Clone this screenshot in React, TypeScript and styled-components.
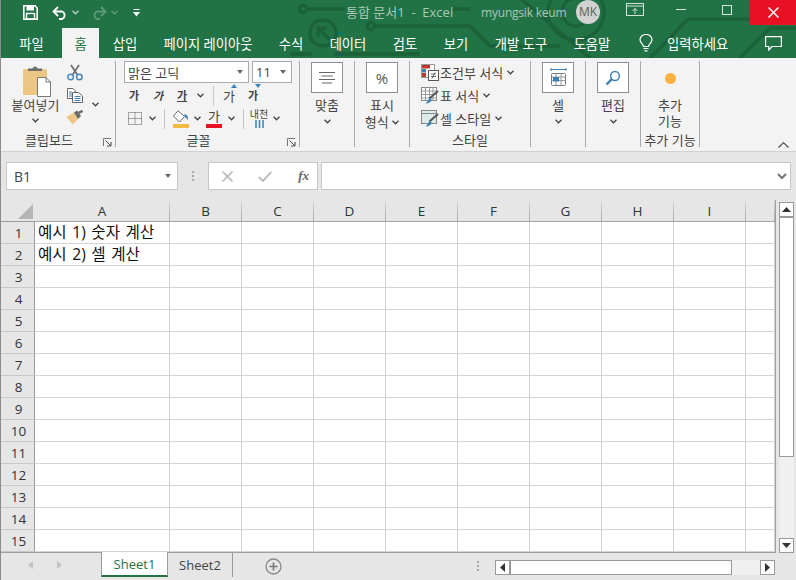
import React from "react";
import styled, { createGlobalStyle } from "styled-components";

const GlobalStyle = createGlobalStyle`
  html, body {
    margin: 0;
    padding: 0;
    background: #e6e6e6;
  }
  * {
    box-sizing: border-box;
  }
  body {
    font-family: "Open Sans", "Noto Sans CJK KR", sans-serif;
  }
`;

const TABS = [
  { label: "파일", width: 61 },
  { label: "홈", width: 37, active: true },
  { label: "삽입", width: 52 },
  { label: "페이지 레이아웃", width: 114 },
  { label: "수식", width: 52 },
  { label: "데이터", width: 62 },
  { label: "검토", width: 52 },
  { label: "보기", width: 50 },
  { label: "개발 도구", width: 80 },
  { label: "도움말", width: 62 },
];

const COLUMNS = ["A", "B", "C", "D", "E", "F", "G", "H", "I", ""];
const ROWS = Array.from({ length: 16 }, (_, i) => i + 1);
const CELLS: Record<string, string> = {
  A1: "예시 1) 숫자 계산",
  A2: "예시 2) 셀 계산",
};

const Chevron: React.FC<{ color?: string }> = ({ color = "#444" }) => (
  <svg width="7" height="5" viewBox="0 0 7 5">
    <path d="M0.5 0.8 L3.5 3.8 L6.5 0.8" fill="none" stroke={color} strokeWidth="1.3" />
  </svg>
);

const Launcher: React.FC = () => (
  <svg width="9" height="9" viewBox="0 0 9 9">
    <path d="M0.5 8 V0.5 H8" fill="none" stroke="#777" />
    <path d="M2.5 2.5 L7.5 7.5 M4 8 H8 V4" fill="none" stroke="#444" />
  </svg>
);

const PasteIcon: React.FC = () => (
  <svg width="28" height="32" viewBox="0 0 28 32">
    <rect x="0" y="4" width="24" height="26" rx="1.5" fill="#edc684" />
    <path d="M5 6 V3.5 H9.5 A2.6 2.6 0 0 1 14.5 3.5 H19 V6 Z" fill="#6e6e6e" />
    <path d="M14.5 12.5 H23 L27.5 17 V31.5 H14.5 Z" fill="#fff" stroke="#777" />
    <path d="M23 12.5 V17 H27.5" fill="none" stroke="#777" />
  </svg>
);

const ScissorsIcon: React.FC = () => (
  <svg width="16" height="17" viewBox="0 0 16 17">
    <path d="M4 1 L10.5 11 M12 1 L5.5 11" fill="none" stroke="#6a6a6a" strokeWidth="1.6" />
    <circle cx="3.6" cy="13" r="2.8" fill="none" stroke="#4a86b8" strokeWidth="1.4" />
    <circle cx="12.4" cy="13" r="2.8" fill="none" stroke="#4a86b8" strokeWidth="1.4" />
  </svg>
);

const CopyIcon: React.FC = () => (
  <svg width="16" height="15" viewBox="0 0 16 15">
    <path d="M0.5 0.5 H6 L8 2.5 V10.5 H0.5 Z" fill="#fff" stroke="#666" />
    <path d="M5.5 4.5 H11.5 L15.5 8 V14.5 H5.5 Z" fill="#fff" stroke="#666" />
    <path d="M2 4 H5 M2 6 H5 M2 8 H5" stroke="#3f80b5" />
    <path d="M7.5 8.5 H13.5 M7.5 10.5 H13.5 M7.5 12.5 H13.5" stroke="#3f80b5" />
  </svg>
);

const BrushIcon: React.FC = () => (
  <svg width="17" height="15" viewBox="0 0 17 15">
    <path d="M0.5 7 L8 2.5 L12 9 L7 14.5 C5 13 3 10 0.5 7 Z" fill="#edc684" />
    <path d="M8 2.5 L11 0.5 L15 6 L12 9 Z" fill="#6a6a6a" />
    <path d="M12.5 3 L16.5 0.8" stroke="#6a6a6a" strokeWidth="2.4" />
  </svg>
);

const BordersIcon: React.FC = () => (
  <svg width="14" height="13" viewBox="0 0 14 13">
    <rect x="0.5" y="0.5" width="13" height="12" fill="none" stroke="#555" strokeDasharray="1 1" />
    <path d="M7 0.5 V12.5 M0.5 6.5 H13.5" stroke="#555" strokeDasharray="1 1" />
  </svg>
);

const FillIcon: React.FC = () => (
  <svg width="17" height="13" viewBox="0 0 17 13">
    <path d="M6 0.8 L12.5 6.5 L7.5 12 L1.5 6 Z" fill="#fff" stroke="#666" />
    <path d="M12.5 4 C15 4.5 16.5 7 16 10 C15 8.5 14 7.5 12.5 7 Z" fill="#3f80b5" />
  </svg>
);

const WrapIcon: React.FC = () => (
  <svg width="9" height="8" viewBox="0 0 9 8">
    <path d="M1 0 V8 M4.5 0 V8 M8 0 V8" stroke="#3f80b5" strokeWidth="1.5" />
  </svg>
);

const AlignIcon: React.FC = () => (
  <svg width="16" height="12" viewBox="0 0 16 12">
    <path d="M0 0.5 H16 M2.5 4 H13.5 M0 7.5 H16 M3 11 H13" stroke="#666" />
  </svg>
);

const CellsIcon: React.FC = () => (
  <svg width="17" height="19" viewBox="0 0 17 19">
    <path d="M1 1.5 H16 M1 0 V3 M16 0 V3" stroke="#3f80b5" />
    <rect x="1.5" y="5.5" width="14" height="12" rx="1" fill="#fff" stroke="#777" />
    <path d="M1.5 9 H15.5 M1.5 12.5 H15.5 M6 5.5 V17.5 M11 5.5 V17.5" stroke="#999" />
    <rect x="3" y="9" width="6" height="4.5" fill="#3f80b5" />
  </svg>
);

const SearchIcon: React.FC = () => (
  <svg width="16" height="16" viewBox="0 0 16 16">
    <circle cx="10" cy="6" r="4.4" fill="#fff" stroke="#3f80b5" strokeWidth="1.5" />
    <path d="M6.8 9.2 L1.5 14.5" stroke="#3f80b5" strokeWidth="2.4" />
  </svg>
);

const CondFormatIcon: React.FC = () => (
  <svg width="18" height="17" viewBox="0 0 18 17">
    <rect x="0.5" y="0.5" width="13" height="13" fill="#fff" stroke="#999" />
    <rect x="1" y="1" width="8" height="3.5" fill="#c0392b" />
    <rect x="1" y="5" width="4" height="3.5" fill="#3f80b5" />
    <rect x="1" y="9" width="4" height="4" fill="#c0392b" />
    <rect x="7.5" y="6.5" width="10" height="10" fill="#fff" stroke="#555" />
    <path d="M10 10 H15 M10 12.5 H15 M14 8.5 L11 14.5" stroke="#444" strokeWidth="0.8" />
  </svg>
);

const TableStyleIcon: React.FC<{ plain?: boolean }> = ({ plain }) => (
  <svg width="18" height="17" viewBox="0 0 18 17">
    <rect x="0.5" y="0.5" width="15" height="13" fill={plain ? "#dbeaea" : "#fff"} stroke="#888" />
    {plain ? (
      <path d="M0.5 3.5 H15.5" stroke="#888" />
    ) : (
      <path d="M0.5 4 H15.5 M0.5 7.5 H15.5 M0.5 11 H15.5 M4.5 0.5 V13.5 M8.5 0.5 V13.5 M12 0.5 V13.5" stroke="#999" />
    )}
    <path d="M17 4 L8.5 11.5" stroke="#555" strokeWidth="2" />
    <path d="M8.5 11 L11 13 C9.5 15.5 7.5 16.5 4.5 16.5 C6.5 15 7 13 8.5 11 Z" fill="#3f80b5" />
  </svg>
);

const App: React.FC = () => (
  <>
    <GlobalStyle />
    <Page>
      <Header>
        <CircuitArt width="796" height="58" viewBox="0 0 796 58">
          <g fill="none" stroke="#1b6239" strokeWidth="3.4">
            <circle cx="303" cy="9" r="3.6" />
            <path d="M307 9 H345 M450 9 H470" />
            <circle cx="323" cy="33" r="13" />
            <path d="M330 40 L318 28 M318 37 V28 H327" />
            <circle cx="371" cy="26" r="3.6" />
            <path d="M375 26 H470 L490 46 H560 M290 54 H312 M334 54 H420" />
            <circle cx="576" cy="12" r="28" />
            <circle cx="576" cy="12" r="14" />
            <path d="M520 -2 L590 58 M688 19 H796 M688 19 L650 58 M740 58 L770 28 H796" />
          </g>
        </CircuitArt>
        <TitleBar>
          <QuickAccess>
            <svg width="15" height="15" viewBox="0 0 15 15">
              <path d="M0.8 0.8 H12 L14.2 3 V14.2 H0.8 Z" fill="none" stroke="#fff" strokeWidth="1.6" />
              <rect x="3.5" y="1" width="7.5" height="4.5" fill="#fff" />
              <rect x="3.5" y="8.5" width="8" height="5.5" fill="none" stroke="#fff" strokeWidth="1.4" />
            </svg>
            <QatSlot $left={14}>
              <svg width="16" height="14" viewBox="0 0 16 14">
                <path d="M2.5 5.5 H10 A4 4 0 0 1 10 13 H7" fill="none" stroke="#fff" strokeWidth="1.8" />
                <path d="M6 1 L1.5 5.5 L6 10" fill="none" stroke="#fff" strokeWidth="1.8" />
              </svg>
            </QatSlot>
            <QatSlot $left={4}>
              <Chevron color="#b9d2c4" />
            </QatSlot>
            <QatSlot $left={12}>
              <svg width="16" height="14" viewBox="0 0 16 14">
                <path d="M13.5 5.5 H6 A4 4 0 0 0 6 13 H9" fill="none" stroke="#5d9a78" strokeWidth="1.8" />
                <path d="M10 1 L14.5 5.5 L10 10" fill="none" stroke="#5d9a78" strokeWidth="1.8" />
              </svg>
            </QatSlot>
            <QatSlot $left={4}>
              <Chevron color="#5d9a78" />
            </QatSlot>
            <QatSlot $left={15}>
              <svg width="7" height="8" viewBox="0 0 7 8">
                <path d="M0.5 0.5 H6.5" stroke="#fff" />
                <path d="M0 3 H7 L3.5 7.5 Z" fill="#fff" />
              </svg>
            </QatSlot>
          </QuickAccess>
          <WindowTitle>통합 문서1&nbsp; - &nbsp;Excel</WindowTitle>
          <UserName>myungsik keum</UserName>
          <Avatar>MK</Avatar>
          <WindowButton>
            <svg width="18" height="13" viewBox="0 0 18 13">
              <rect x="0.5" y="0.5" width="17" height="12" fill="none" stroke="#d5e3db" />
              <path d="M0.5 3 H17.5" stroke="#d5e3db" />
              <path d="M9 11 V5.5 M6.5 8 L9 5.5 L11.5 8" fill="none" stroke="#d5e3db" />
            </svg>
          </WindowButton>
          <WindowButton>
            <svg width="10" height="1" viewBox="0 0 10 1">
              <path d="M0 0.5 H10" stroke="#d5e3db" />
            </svg>
          </WindowButton>
          <WindowButton>
            <svg width="10" height="10" viewBox="0 0 10 10">
              <rect x="0.5" y="0.5" width="9" height="9" fill="none" stroke="#d5e3db" />
            </svg>
          </WindowButton>
          <CloseButton>
            <svg width="11" height="11" viewBox="0 0 11 11">
              <path d="M0.5 0.5 L10.5 10.5 M10.5 0.5 L0.5 10.5" stroke="#fff" strokeWidth="1.5" />
            </svg>
          </CloseButton>
        </TitleBar>
        <TabRow>
          {TABS.map(({ label, width, active }) => (
            <Tab key={label} $width={width} $active={!!active}>
              {label}
            </Tab>
          ))}
          <TellMe>
            <svg width="14" height="18" viewBox="0 0 14 18">
              <path d="M4.5 12.5 C4.5 10 1 9 1 5.8 A6 5.3 0 0 1 13 5.8 C13 9 9.5 10 9.5 12.5 Z" fill="none" stroke="#fff" strokeWidth="1.2" />
              <path d="M4.5 14.5 H9.5 M5.5 16.8 H8.5" stroke="#fff" strokeWidth="1.2" />
            </svg>
            <span>입력하세요</span>
          </TellMe>
          <CommentButton>
            <svg width="17" height="15" viewBox="0 0 17 15">
              <path d="M0.6 0.6 H16.4 V10.5 H7 L3.8 14 V10.5 H0.6 Z" fill="none" stroke="#fff" strokeWidth="1.2" />
            </svg>
          </CommentButton>
        </TabRow>
      </Header>

      <Ribbon>
        <Group $width={115}>
          <ClipboardBody>
            <PasteColumn>
              <PasteIcon />
              <CommandLabel>붙여넣기</CommandLabel>
              <PasteChevron>
                <Chevron />
              </PasteChevron>
            </PasteColumn>
            <ClipboardTools>
              <ScissorsIcon />
              <CopyIcon />
              <BrushIcon />
            </ClipboardTools>
            <ClipboardChevron>
              <Chevron />
            </ClipboardChevron>
          </ClipboardBody>
          <GroupLabel $launcher>
            클립보드
            <LauncherSlot>
              <Launcher />
            </LauncherSlot>
          </GroupLabel>
        </Group>

        <Group $width={184}>
          <FontBody>
            <SelectRow>
              <FontSelect $width={125}>
                <span>맑은 고딕</span>
                <SelectCaret />
              </FontSelect>
              <FontSelect $width={40}>
                <span>11</span>
                <SelectCaret />
              </FontSelect>
            </SelectRow>
            <ToolRow>
              <ToolSlot $width={24}><Glyph>가</Glyph></ToolSlot>
              <ToolSlot $width={24}><Glyph $italic>가</Glyph></ToolSlot>
              <ToolSlot $width={24}><Glyph $underline>가</Glyph></ToolSlot>
              <ToolSlot $width={12}><Chevron /></ToolSlot>
              <ToolDivider $left={7} $right={3} />
              <ToolSlot $width={24}>
                <Glyph $big>가</Glyph>
                <SizeArrow $up />
              </ToolSlot>
              <ToolSlot $width={24}>
                <Glyph>가</Glyph>
                <SizeArrow />
              </ToolSlot>
            </ToolRow>
            <ToolRow>
              <ToolSlot $width={25}><BordersIcon /></ToolSlot>
              <ToolSlot $width={10}><Chevron /></ToolSlot>
              <ToolDivider $left={7} $right={4} />
              <ToolSlot $width={23}>
                <ColorStack>
                  <FillIcon />
                  <ColorBar $color="#f4b942" />
                </ColorStack>
              </ToolSlot>
              <ToolSlot $width={10}><Chevron /></ToolSlot>
              <ToolSlot $width={24}>
                <ColorStack>
                  <Glyph $big>가</Glyph>
                  <ColorBar $color="#e81123" />
                </ColorStack>
              </ToolSlot>
              <ToolSlot $width={10}><Chevron /></ToolSlot>
              <ToolDivider $left={7} $right={3} />
              <ToolSlot $width={24}>
                <ColorStack>
                  <WrapLabel>내천</WrapLabel>
                  <WrapIcon />
                </ColorStack>
              </ToolSlot>
              <ToolSlot $width={10}><Chevron /></ToolSlot>
            </ToolRow>
          </FontBody>
          <GroupLabel $launcher>
            글꼴
            <LauncherSlot>
              <Launcher />
            </LauncherSlot>
          </GroupLabel>
        </Group>

        <Group $width={55}>
          <LargeCommand>
            <BoxButton><AlignIcon /></BoxButton>
            <CommandLabel>맞춤</CommandLabel>
            <Chevron />
          </LargeCommand>
        </Group>

        <Group $width={55}>
          <LargeCommand>
            <BoxButton><Percent>%</Percent></BoxButton>
            <CommandLabel>표시</CommandLabel>
            <InlineCommand>형식 <Chevron /></InlineCommand>
          </LargeCommand>
        </Group>

        <Group $width={121}>
          <StyleList>
            <StyleRow>
              <CondFormatIcon />
              <span>조건부 서식</span>
              <Chevron />
            </StyleRow>
            <StyleRow>
              <TableStyleIcon />
              <span>표 서식</span>
              <Chevron />
            </StyleRow>
            <StyleRow>
              <TableStyleIcon plain />
              <span>셀 스타일</span>
              <Chevron />
            </StyleRow>
          </StyleList>
          <GroupLabel>스타일</GroupLabel>
        </Group>

        <Group $width={55}>
          <LargeCommand>
            <BoxButton><CellsIcon /></BoxButton>
            <CommandLabel>셀</CommandLabel>
            <Chevron />
          </LargeCommand>
        </Group>

        <Group $width={55}>
          <LargeCommand>
            <BoxButton><SearchIcon /></BoxButton>
            <CommandLabel>편집</CommandLabel>
            <Chevron />
          </LargeCommand>
        </Group>

        <Group $width={59}>
          <AddInCommand>
            <AddInDot />
            <AddInText>추가<br />기능</AddInText>
          </AddInCommand>
          <GroupLabel>추가 기능</GroupLabel>
        </Group>

        <CollapseRibbon>
          <svg width="11" height="6" viewBox="0 0 11 6">
            <path d="M0.5 5.5 L5.5 0.7 L10.5 5.5" fill="none" stroke="#444" strokeWidth="1.1" />
          </svg>
        </CollapseRibbon>
      </Ribbon>

      <FormulaBar>
        <NameBox>
          <span>B1</span>
          <SelectCaret />
        </NameBox>
        <GripDots>
          <i /><i /><i />
        </GripDots>
        <FormulaActions>
          <svg width="11" height="11" viewBox="0 0 11 11">
            <path d="M0.5 0.5 L10.5 10.5 M10.5 0.5 L0.5 10.5" stroke="#bdbdbd" strokeWidth="1.6" />
          </svg>
          <svg width="14" height="11" viewBox="0 0 14 11">
            <path d="M0.8 6 L5 10 L13.2 0.8" fill="none" stroke="#bdbdbd" strokeWidth="2" />
          </svg>
          <FxLabel>fx</FxLabel>
        </FormulaActions>
        <FormulaInput>
          <svg width="10" height="7" viewBox="0 0 10 7">
            <path d="M1 1 L5 5 L9 1" fill="none" stroke="#777" strokeWidth="2" />
          </svg>
        </FormulaInput>
      </FormulaBar>

      <SheetArea>
        <Sheet>
          <CornerCell>
            <CornerTriangle />
          </CornerCell>
          {COLUMNS.map((col, i) => (
            <ColumnHeader key={i}>{col}</ColumnHeader>
          ))}
          {ROWS.map((row) => (
            <React.Fragment key={row}>
              <RowHeader>{row < 16 ? row : ""}</RowHeader>
              {COLUMNS.map((col, i) => (
                <Cell key={i}>{CELLS[`${col}${row}`]}</Cell>
              ))}
            </React.Fragment>
          ))}
        </Sheet>
        <VerticalScroll>
          <ScrollButton $height={15}>
            <svg width="9" height="5" viewBox="0 0 9 5"><path d="M0 5 H9 L4.5 0 Z" fill="#333" /></svg>
          </ScrollButton>
          <VerticalThumb />
          <ScrollTrack />
          <ScrollButton $height={15}>
            <svg width="9" height="5" viewBox="0 0 9 5"><path d="M0 0 H9 L4.5 5 Z" fill="#333" /></svg>
          </ScrollButton>
        </VerticalScroll>
      </SheetArea>

      <BottomBar>
        <SheetNav>
          <svg width="5" height="8" viewBox="0 0 5 8"><path d="M5 0 V8 L0 4 Z" fill="#c4c4c4" /></svg>
          <svg width="5" height="8" viewBox="0 0 5 8"><path d="M0 0 V8 L5 4 Z" fill="#c4c4c4" /></svg>
        </SheetNav>
        <SheetTab $active>Sheet1</SheetTab>
        <SheetTab>Sheet2</SheetTab>
        <AddSheet>
          <svg width="17" height="17" viewBox="0 0 17 17">
            <circle cx="8.5" cy="8.5" r="7.5" fill="none" stroke="#8a8a8a" strokeWidth="1.3" />
            <path d="M8.5 4.5 V12.5 M4.5 8.5 H12.5" stroke="#777" strokeWidth="1.6" />
          </svg>
        </AddSheet>
        <BarGrip>
          <i /><i /><i />
        </BarGrip>
        <HorizontalScroll>
          <ScrollButton $width={15}>
            <svg width="5" height="9" viewBox="0 0 5 9"><path d="M5 0 V9 L0 4.5 Z" fill="#333" /></svg>
          </ScrollButton>
          <HorizontalThumb />
          <ScrollTrack />
          <ScrollButton $width={15}>
            <svg width="5" height="9" viewBox="0 0 5 9"><path d="M0 0 V9 L5 4.5 Z" fill="#333" /></svg>
          </ScrollButton>
        </HorizontalScroll>
      </BottomBar>
    </Page>
  </>
);

const Page = styled.div`
  width: 796px;
  height: 580px;
  overflow: hidden;
  display: flex;
  flex-direction: column;
  background: #e6e6e6;
  color: #444;
  border-left: 1px solid #8c8c8c;
`;

const Header = styled.header`
  position: relative;
  height: 58px;
  flex: none;
  background: #217346;
  margin-left: -1px;
`;

const CircuitArt = styled.svg`
  position: absolute;
  inset: 0;
`;

const TitleBar = styled.div`
  position: relative;
  display: flex;
  align-items: flex-start;
  height: 28px;
`;

const QuickAccess = styled.div`
  width: 346px;
  height: 25px;
  padding-left: 23px;
  display: flex;
  align-items: center;
`;

const QatSlot = styled.span<{ $left: number }>`
  display: flex;
  margin-left: ${({ $left }) => $left}px;
`;

const WindowTitle = styled.div`
  width: 135px;
  font-size: 13px;
  line-height: 25px;
  color: #a9c9b7;
  white-space: nowrap;
`;

const UserName = styled.div`
  width: 95px;
  font-size: 12px;
  letter-spacing: -0.2px;
  line-height: 25px;
  color: #a9c9b7;
  white-space: nowrap;
`;

const Avatar = styled.div`
  width: 24px;
  height: 24px;
  margin-right: 12px;
  border-radius: 50%;
  background: #d2d2d2;
  color: #5d5d5d;
  font-size: 12px;
  line-height: 24px;
  text-align: center;
`;

const WindowButton = styled.div`
  width: 46px;
  height: 25px;
  display: flex;
  align-items: center;
  justify-content: center;
  padding-bottom: 6px;
`;

const CloseButton = styled(WindowButton)`
  background: #e81123;
  padding-bottom: 0;
`;

const TabRow = styled.nav`
  position: relative;
  display: flex;
  height: 30px;
  padding-left: 1px;
`;

const Tab = styled.div<{ $width: number; $active: boolean }>`
  width: ${({ $width }) => $width}px;
  display: flex;
  align-items: center;
  justify-content: center;
  font-size: 13.3px;
  color: ${({ $active }) => ($active ? "#217346" : "#fff")};
  background: ${({ $active }) => ($active ? "#f3f3f3" : "transparent")};
`;

const TellMe = styled.div`
  display: flex;
  align-items: center;
  gap: 14px;
  margin-left: 16px;
  width: 126px;
  font-size: 13.3px;
  color: #fff;
`;

const CommentButton = styled.div`
  display: flex;
  align-items: center;
`;

const Ribbon = styled.section`
  position: relative;
  display: flex;
  flex: none;
  height: 94px;
  padding-top: 3px;
  background: #f3f3f3;
  border-bottom: 1px solid #d2d2d2;
`;

const Group = styled.div<{ $width: number }>`
  position: relative;
  width: ${({ $width }) => $width}px;
  height: 86px;
  display: flex;
  flex-direction: column;
  border-right: 1px solid #a9a9a9;
`;

const GroupLabel = styled.div<{ $launcher?: boolean }>`
  position: relative;
  flex: none;
  height: 15px;
  padding-right: ${({ $launcher }) => ($launcher ? 18 : 0)}px;
  font-size: 13px;
  line-height: 17px;
  text-align: center;
  color: #444;
  white-space: nowrap;
`;

const LauncherSlot = styled.span`
  position: absolute;
  right: 3px;
  bottom: 0;
  display: flex;
`;

const ClipboardBody = styled.div`
  flex: 1;
  display: flex;
`;

const PasteColumn = styled.div`
  width: 69px;
  display: flex;
  flex-direction: column;
  align-items: center;
  padding-top: 4px;
  > svg {
    margin-left: 3px;
  }
`;

const PasteChevron = styled.div`
  display: flex;
  margin-top: 4px;
`;

const CommandLabel = styled.div`
  font-size: 13px;
  line-height: 17px;
  color: #444;
  white-space: nowrap;
`;

const ClipboardTools = styled.div`
  width: 9px;
  display: flex;
  flex-direction: column;
  align-items: center;
  gap: 7px;
  padding-top: 3px;
`;

const ClipboardChevron = styled.div`
  margin-left: 13px;
  padding-top: 29px;
`;

const FontBody = styled.div`
  flex: 1;
  padding-left: 6px;
`;

const SelectRow = styled.div`
  display: flex;
  gap: 3px;
  margin: 0 0 1px 2px;
`;

const FontSelect = styled.div<{ $width: number }>`
  width: ${({ $width }) => $width}px;
  height: 22px;
  display: flex;
  align-items: center;
  justify-content: space-between;
  padding: 0 5px 0 3px;
  background: #fff;
  border: 1px solid #ababab;
  font-size: 13px;
  color: #444;
`;

const SelectCaret = styled.i`
  width: 0;
  height: 0;
  border-left: 3.5px solid transparent;
  border-right: 3.5px solid transparent;
  border-top: 4px solid #666;
`;

const ToolRow = styled.div`
  display: flex;
  align-items: center;
  height: 23px;
`;

const ToolSlot = styled.div<{ $width: number }>`
  position: relative;
  width: ${({ $width }) => $width}px;
  height: 100%;
  display: flex;
  align-items: center;
  justify-content: center;
`;

const ToolDivider = styled.div<{ $left: number; $right: number }>`
  width: 1px;
  height: 20px;
  background: #c6c6c6;
  margin: 0 ${({ $right }) => $right}px 0 ${({ $left }) => $left}px;
`;

const Glyph = styled.span<{ $italic?: boolean; $underline?: boolean; $big?: boolean }>`
  font-size: ${({ $big }) => ($big ? 13 : 11)}px;
  line-height: 14px;
  font-weight: ${({ $big }) => ($big ? 400 : 700)};
  font-style: ${({ $italic }) => ($italic ? "italic" : "normal")};
  text-decoration: ${({ $underline }) => ($underline ? "underline" : "none")};
  color: #444;
`;

const SizeArrow = styled.i<{ $up?: boolean }>`
  position: absolute;
  top: 0;
  right: 4px;
  width: 0;
  height: 0;
  border-left: 3px solid transparent;
  border-right: 3px solid transparent;
  border-bottom: ${({ $up }) => ($up ? "4px solid #3f80b5" : "none")};
  border-top: ${({ $up }) => ($up ? "none" : "4px solid #3f80b5")};
`;

const ColorStack = styled.div`
  display: flex;
  flex-direction: column;
  align-items: center;
  gap: 1px;
`;

const ColorBar = styled.i<{ $color: string }>`
  width: 16px;
  height: 4px;
  background: ${({ $color }) => $color};
`;

const WrapLabel = styled.span`
  font-size: 10px;
  line-height: 10px;
  color: #444;
`;

const LargeCommand = styled.div`
  display: flex;
  flex-direction: column;
  align-items: center;
  padding-top: 1px;
  > svg {
    margin-top: 5px;
  }
`;

const BoxButton = styled.div`
  width: 32px;
  height: 31px;
  margin-bottom: 4px;
  display: flex;
  align-items: center;
  justify-content: center;
  background: #fff;
  border: 1px solid #8f8f8f;
`;

const Percent = styled.span`
  font-size: 15px;
  color: #555;
`;

const InlineCommand = styled.div`
  font-size: 13px;
  line-height: 16px;
  color: #444;
  white-space: nowrap;
  svg {
    vertical-align: 2px;
  }
`;

const StyleList = styled.div`
  flex: 1;
  display: flex;
  flex-direction: column;
  padding: 0 0 0 11px;
`;

const StyleRow = styled.div`
  display: flex;
  align-items: center;
  height: 23px;
  font-size: 13px;
  color: #444;
  white-space: nowrap;
  span {
    margin: 0 4px 0 1px;
  }
`;

const AddInCommand = styled.div`
  flex: 1;
  display: flex;
  flex-direction: column;
  align-items: center;
`;

const AddInDot = styled.i`
  width: 11px;
  height: 11px;
  margin-top: 12px;
  border-radius: 50%;
  background: #fbb040;
`;

const AddInText = styled.div`
  margin-top: 13px;
  font-size: 13px;
  line-height: 16px;
  text-align: center;
  color: #444;
`;

const CollapseRibbon = styled.div`
  position: absolute;
  right: 7px;
  bottom: 3px;
  display: flex;
`;

const FormulaBar = styled.div`
  flex: none;
  height: 48px;
  display: flex;
  align-items: center;
  padding: 0 5px;
`;

const NameBox = styled.div`
  width: 172px;
  height: 28px;
  display: flex;
  align-items: center;
  justify-content: space-between;
  padding: 0 6px 0 7px;
  background: #fff;
  border: 1px solid #c6c6c6;
  font-size: 14px;
  color: #444;
`;

const GripDots = styled.div`
  width: 30px;
  display: flex;
  flex-direction: column;
  align-items: center;
  gap: 2px;
  i {
    width: 2px;
    height: 2px;
    background: #aaa;
  }
`;

const FormulaActions = styled.div`
  width: 110px;
  height: 28px;
  display: flex;
  align-items: center;
  justify-content: space-between;
  padding: 0 8px 0 13px;
  background: #fff;
  border: 1px solid #c6c6c6;
  svg:nth-child(2) {
    margin-left: -2px;
  }
`;

const FxLabel = styled.span`
  font-family: "Liberation Serif", serif;
  font-style: italic;
  font-weight: 700;
  font-size: 13px;
  color: #666;
`;

const FormulaInput = styled.div`
  width: 470px;
  height: 28px;
  margin-left: 3px;
  display: flex;
  align-items: center;
  justify-content: flex-end;
  padding-right: 3px;
  background: #fff;
  border: 1px solid #c6c6c6;
`;

const SheetArea = styled.div`
  flex: none;
  height: 353px;
  display: flex;
`;

const Sheet = styled.div`
  width: 775px;
  height: 353px;
  overflow: hidden;
  display: grid;
  grid-template-columns: 34px 135px repeat(8, 72px) 29px;
  grid-auto-rows: 22px;
  grid-template-rows: 22px;
  background: #fff;
  border-right: 1px solid #a0a0a0;
  border-bottom: 1px solid #a0a0a0;
`;

const CornerCell = styled.div`
  display: flex;
  align-items: flex-end;
  justify-content: flex-end;
  padding: 0 2px 2px 0;
  background: #e6e6e6;
  border-bottom: 1px solid #9b9b9b;
`;

const CornerTriangle = styled.i`
  width: 15px;
  height: 15px;
  background: #b6b6b6;
  clip-path: polygon(100% 0, 100% 100%, 0 100%);
`;

const ColumnHeader = styled.div`
  display: flex;
  align-items: center;
  justify-content: center;
  background: #e6e6e6;
  border-bottom: 1px solid #9b9b9b;
  border-right: 1px solid;
  border-image: linear-gradient(#dcdcdc, #a3a3a3) 1;
  font-size: 13.5px;
  color: #333;
`;

const RowHeader = styled.div`
  display: flex;
  align-items: center;
  justify-content: center;
  padding-left: 2px;
  background: #e6e6e6;
  border-right: 1px solid #9b9b9b;
  border-bottom: 1px solid #c8c8c8;
  font-size: 13.5px;
  color: #333;
`;

const Cell = styled.div`
  padding-left: 3px;
  border-right: 1px solid #d4d4d4;
  border-bottom: 1px solid #d4d4d4;
  font-size: 15.6px;
  word-spacing: 1.5px;
  line-height: 21px;
  color: #111;
  white-space: nowrap;
`;

const VerticalScroll = styled.div`
  width: 15px;
  height: 351px;
  margin: 2px 0 0 3px;
  display: flex;
  flex-direction: column;
  background: #f0f0f0;
`;

const ScrollButton = styled.div<{ $height?: number; $width?: number }>`
  flex: none;
  width: ${({ $width }) => ($width ? `${$width}px` : "auto")};
  height: ${({ $height }) => ($height ? `${$height}px` : "auto")};
  display: flex;
  align-items: center;
  justify-content: center;
  background: #fff;
  border: 1px solid #9a9a9a;
`;

const VerticalThumb = styled.div`
  height: 240px;
  flex: none;
  background: #fff;
  border: 1px solid #9a9a9a;
`;

const ScrollTrack = styled.div`
  flex: 1;
  background: #f0f0f0;
`;

const BottomBar = styled.footer`
  flex: 1;
  display: flex;
  align-items: flex-start;
  background: #e6e6e6;
`;

const SheetNav = styled.div`
  width: 100px;
  height: 24px;
  display: flex;
  align-items: center;
  gap: 24px;
  padding-left: 27px;
`;

const SheetTab = styled.div<{ $active?: boolean }>`
  width: ${({ $active }) => ($active ? 67 : 65)}px;
  height: ${({ $active }) => ($active ? 25 : 24)}px;
  margin-top: ${({ $active }) => ($active ? -1 : 0)}px;
  display: flex;
  align-items: center;
  justify-content: center;
  font-size: 13px;
  color: ${({ $active }) => ($active ? "#217346" : "#444")};
  background: ${({ $active }) => ($active ? "#fff" : "transparent")};
  border-left: ${({ $active }) => ($active ? "1px solid #9b9b9b" : "none")};
  border-right: 1px solid #9b9b9b;
  border-bottom: ${({ $active }) => ($active ? "2px solid #217346" : "none")};
`;

const AddSheet = styled.div`
  width: 230px;
  height: 26px;
  padding: 5px 0 0 32px;
  display: flex;
  align-items: flex-start;
`;

const BarGrip = styled(GripDots)`
  height: 26px;
  justify-content: center;
`;

const HorizontalScroll = styled.div`
  width: 280px;
  height: 15px;
  margin: 7px 0 0 2px;
  display: flex;
  background: #f0f0f0;
`;

const HorizontalThumb = styled.div`
  width: 222px;
  flex: none;
  background: #fff;
  border: 1px solid #9a9a9a;
`;

export default App;
